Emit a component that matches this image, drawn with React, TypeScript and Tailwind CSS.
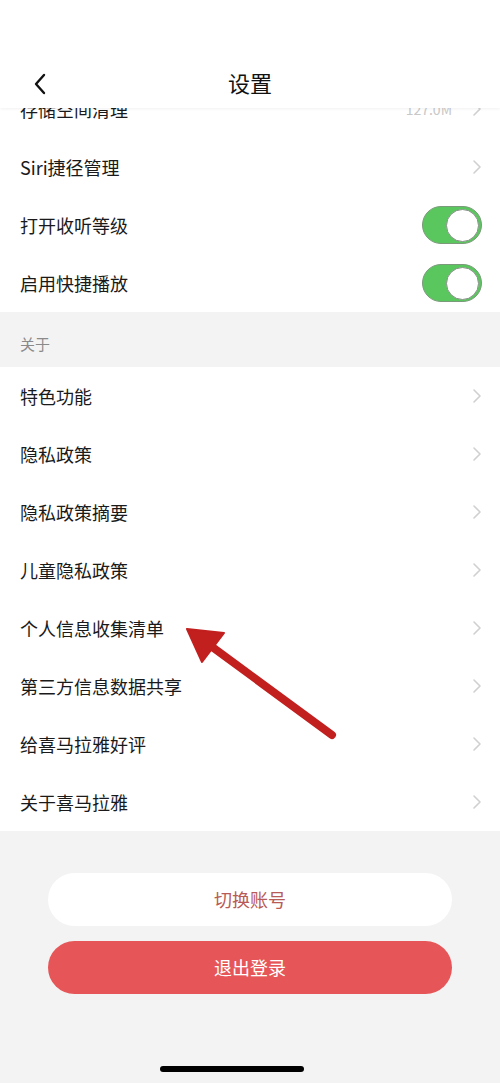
import React from 'react';

const font = { fontFamily: '"Noto Sans CJK SC", "Noto Sans", sans-serif' };

const Chevron = () => (
  <svg width="10" height="16" viewBox="0 0 10 16" className="text-[#d0d0d0]">
    <path d="M2 2l6 6-6 6" fill="none" stroke="currentColor" strokeWidth="1.6" strokeLinecap="round" strokeLinejoin="round" />
  </svg>
);

const Toggle = () => (
  <div className="w-[60px] h-[38px] rounded-full bg-[#5ac75e] border border-[#7a9a7a] flex items-center justify-end p-[2px]">
    <div className="w-[33px] h-[33px] rounded-full bg-white border border-[#8a8f8a]" />
  </div>
);

const Row = ({ label, right }: { label: string; right?: React.ReactNode }) => (
  <div className="h-[58px] flex items-center justify-between pl-5 pr-[18px] bg-white">
    <span className="text-[18px] text-[#1a1a1a]">{label}</span>
    {right ?? <Chevron />}
  </div>
);

const aboutItems = ['特色功能', '隐私政策', '隐私政策摘要', '儿童隐私政策', '个人信息收集清单', '第三方信息数据共享', '给喜马拉雅好评', '关于喜马拉雅'];

export default function App() {
  return (
    <div className="relative w-[500px] h-[1083px] bg-[#f3f3f3] overflow-hidden flex flex-col" style={font}>
      {/* header */}
      <div className="h-[108px] bg-white flex flex-col shrink-0 relative z-10 shadow-[0_1px_3px_rgba(0,0,0,0.06)]">
        <div className="h-[60px]" />
        <div className="h-[48px] relative flex items-start justify-center">
          <div className="absolute left-[32px] top-[12px]">
            <svg width="16" height="24" viewBox="0 0 16 24">
              <path d="M12 3L4 12l8 9" fill="none" stroke="#111" strokeWidth="2.4" strokeLinecap="round" strokeLinejoin="round" />
            </svg>
          </div>
          <span className="text-[22px] text-[#111] leading-[48px] mt-[-2px]">设置</span>
        </div>
      </div>

      {/* scrolled list, top row partly hidden under the header */}
      <div className="overflow-hidden flex-1">
        <div className="-mt-[28px]">
          <Row label="存储空间清理" right={<div className="flex items-center gap-5"><span className="text-[14px] text-[#c8c8c8]">127.0M</span><Chevron /></div>} />
          <Row label="Siri捷径管理" />
          <Row label="打开收听等级" right={<Toggle />} />
          <Row label="启用快捷播放" right={<Toggle />} />
          <div className="h-[55px] bg-[#f3f3f3] flex items-center pl-5 pt-[10px]">
            <span className="text-[15px] text-[#8a8a8a]">关于</span>
          </div>
          {aboutItems.map((t) => (
            <Row key={t} label={t} />
          ))}
          <div className="flex flex-col items-center gap-[15px] pt-[42px]">
            <button className="w-[404px] h-[53px] rounded-full bg-white text-[18px] text-[#b85a56]">切换账号</button>
            <button className="w-[404px] h-[53px] rounded-full bg-[#e65658] text-[18px] text-white">退出登录</button>
          </div>
        </div>
      </div>

      <div className="absolute left-[160px] top-[1066px] w-[144px] h-[6px] rounded-full bg-black" />

      {/* annotation arrow */}
      <svg className="absolute left-0 top-0 pointer-events-none" width="500" height="1083">
        <line x1="332" y1="735" x2="200" y2="638" stroke="#c21f1f" strokeWidth="8" strokeLinecap="round" />
        <polygon points="187,629 224,633 202,662" fill="#c21f1f" stroke="#c21f1f" strokeWidth="2" strokeLinejoin="round" />
      </svg>
    </div>
  );
}
